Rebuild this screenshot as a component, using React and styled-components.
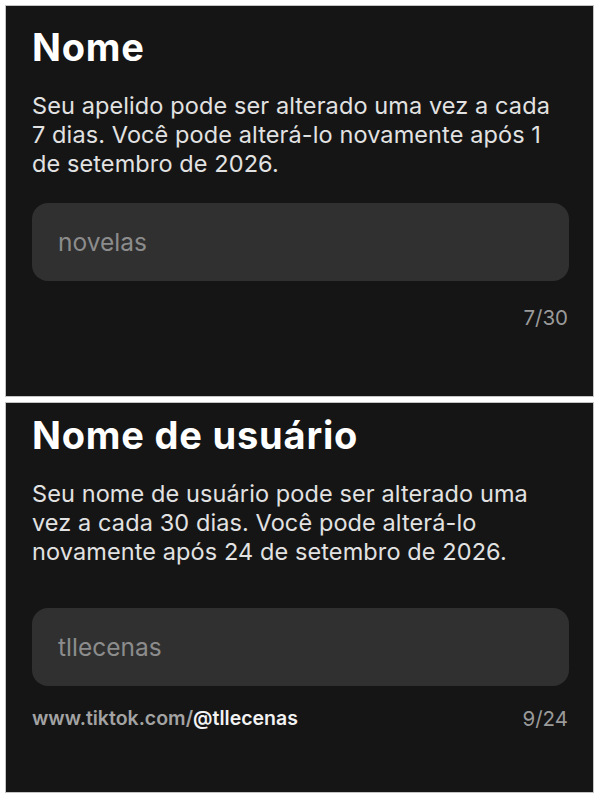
import React from "react";
import styled, { createGlobalStyle } from "styled-components";

const GlobalStyle = createGlobalStyle`
  html, body {
    margin: 0;
    padding: 0;
    background: #ffffff;
  }
  body {
    font-family: Inter, "Liberation Sans", Arial, sans-serif;
    -webkit-font-smoothing: antialiased;
  }
`;

const sections = [
  {
    id: "nickname",
    title: "Nome",
    description:
      "Seu apelido pode ser alterado uma vez a cada 7 dias. Você pode alterá-lo novamente após 1 de setembro de 2026.",
    value: "novelas",
    count: "7/30",
    top: 20,
    inputGap: 25,
    footerGap: 22,
    height: 392,
  },
  {
    id: "username",
    title: "Nome de usuário",
    description:
      "Seu nome de usuário pode ser alterado uma vez a cada 30 dias. Você pode alterá-lo novamente após 24 de setembro de 2026.",
    value: "tllecenas",
    count: "9/24",
    link: { base: "www.tiktok.com/", handle: "@tllecenas" },
    top: 11,
    inputGap: 42,
    footerGap: 18,
    height: 391,
  },
];

export default function App() {
  return (
    <>
      <GlobalStyle />
      <Page>
        {sections.map((s) => (
          <Panel key={s.id} $top={s.top} $height={s.height}>
            <Title>{s.title}</Title>
            <Description>{s.description}</Description>
            <Field $gap={s.inputGap}>
              <FieldText>{s.value}</FieldText>
            </Field>
            <Footer $gap={s.footerGap} $split={!!s.link}>
              {s.link && (
                <Link>
                  {s.link.base}
                  <strong>{s.link.handle}</strong>
                </Link>
              )}
              <Counter>{s.count}</Counter>
            </Footer>
          </Panel>
        ))}
      </Page>
    </>
  );
}

const Page = styled.div`
  display: flex;
  flex-direction: column;
  gap: 5px;
  padding: 5px 6px 7px 5px;
  width: 600px;
  box-sizing: border-box;
`;

const Panel = styled.section`
  box-sizing: border-box;
  height: ${(p) => p.$height}px;
  background: #151515;
  border: 1px solid #c4c4c4;
  padding: ${(p) => p.$top - 1}px 24px 0 26px;
  display: flex;
  flex-direction: column;
`;

const Title = styled.h1`
  margin: 0;
  color: #ffffff;
  font-size: 38px;
  line-height: 44px;
  font-weight: 700;
  letter-spacing: 0.8px;
`;

const Description = styled.p`
  margin: 22px 0 0;
  max-width: 532px;
  color: #e2e2e2;
  font-size: 23.5px;
  line-height: 29px;
  font-weight: 400;
  letter-spacing: 0.1px;
`;

const Field = styled.div`
  margin-top: ${(p) => p.$gap}px;
  height: 78px;
  border-radius: 16px;
  background: #303030;
  display: flex;
  align-items: center;
  padding: 0 26px;
`;

const FieldText = styled.span`
  color: #8c8c8c;
  font-size: 24.5px;
`;

const Footer = styled.div`
  margin-top: ${(p) => p.$gap}px;
  height: 28px;
  display: flex;
  align-items: center;
  justify-content: ${(p) => (p.$split ? "space-between" : "flex-end")};
  padding-right: 1px;
`;

const Link = styled.span`
  color: #a3a3a3;
  font-size: 19.5px;
  font-weight: 600;

  strong {
    color: #f2f2f2;
    font-weight: 600;
  }
`;

const Counter = styled.span`
  color: #9a9a9a;
  font-size: 20.5px;
`;
